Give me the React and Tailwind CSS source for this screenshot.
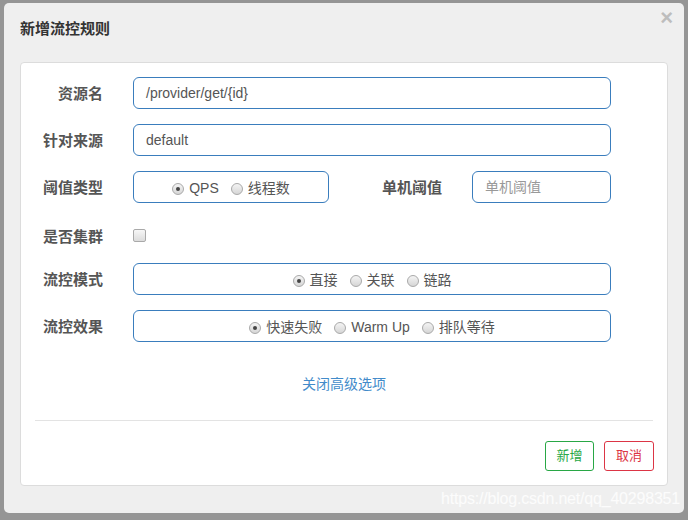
import React from 'react'

const font = { fontFamily: '"Liberation Sans", "Noto Sans CJK SC", sans-serif' }

const Radio = ({ checked }) => (
  <span className="relative inline-block w-[12px] h-[12px] rounded-full border border-[#a9a9a9] bg-gradient-to-b from-[#f4f4f4] to-[#d6d6d6] align-middle">
    {checked && <span className="absolute left-[3px] top-[3px] w-[4px] h-[4px] rounded-full bg-[#444]"></span>}
  </span>
)

const RadioGroup = ({ items, className }) => (
  <div className={`h-[32px] rounded-[6px] border border-[#3a7dbd] flex items-center justify-center gap-[12px] pt-[3px] text-[14px] text-[#555] ${className || ''}`}>
    {items.map((it, i) => (
      <label key={it} className="flex items-center gap-[5px]">
        <Radio checked={i === 0} />
        <span>{it}</span>
      </label>
    ))}
  </div>
)

const Label = ({ children }) => (
  <div className="w-[82px] pt-[3px] text-right text-[15px] font-bold text-[#555] shrink-0">{children}</div>
)

const TextInput = ({ value, placeholder, className }) => (
  <div className={`h-[32px] rounded-[6px] border border-[#3a7dbd] flex items-center px-[12px] text-[14px] ${value ? 'text-[#555]' : 'text-[#999]'} ${className || ''}`}>
    {value || placeholder}
  </div>
)

export default function App() {
  return (
    <div className="w-[688px] h-[520px] bg-[#959595] pt-[3px] px-[4px] overflow-hidden" style={font}>
      <div className="relative h-[510px] bg-[#efefef] rounded-[5px] px-[16px]">
        <div className="h-[59px] flex items-center pb-[6px]">
          <h4 className="text-[15px] font-bold text-[#333]">新增流控规则</h4>
        </div>
        <span className="absolute right-[11px] top-[4px] text-[22px] font-bold text-[#bdbdbd] leading-none">×</span>

        <div className="h-[424px] bg-white border border-[#dcdcdc] rounded-[4px] pt-[14px]">
          <div className="flex flex-col gap-[15px]">
            <div className="flex items-center">
              <Label>资源名</Label>
              <TextInput value="/provider/get/{id}" className="ml-[30px] w-[478px]" />
            </div>
            <div className="flex items-center">
              <Label>针对来源</Label>
              <TextInput value="default" className="ml-[30px] w-[478px]" />
            </div>
            <div className="flex items-center">
              <Label>阈值类型</Label>
              <RadioGroup items={['QPS', '线程数']} className="ml-[30px] w-[196px]" />
              <div className="w-[113px] pt-[3px] text-right text-[15px] font-bold text-[#555]">单机阈值</div>
              <TextInput placeholder="单机阈值" className="ml-[30px] w-[139px]" />
            </div>
            <div className="flex items-center h-[30px] pt-[5px]">
              <Label>是否集群</Label>
              <span className="ml-[30px] w-[13px] h-[13px] rounded-[2px] border border-[#a9a9a9] bg-gradient-to-b from-[#f7f7f7] to-[#dcdcdc]"></span>
            </div>
            <div className="flex items-center">
              <Label>流控模式</Label>
              <RadioGroup items={['直接', '关联', '链路']} className="ml-[30px] w-[478px]" />
            </div>
            <div className="flex items-center">
              <Label>流控效果</Label>
              <RadioGroup items={['快速失败', 'Warm Up', '排队等待']} className="ml-[30px] w-[478px]" />
            </div>
          </div>

          <div className="mt-[32px] text-center text-[14px] text-[#428bca]">关闭高级选项</div>

          <div className="mx-[14px] mt-[25px] border-t border-[#e3e3e3]"></div>

          <div className="flex justify-end gap-[10px] pr-[13px] mt-[20px]">
            <button className="w-[49px] h-[30px] rounded-[3px] border border-[#28a745] text-[13px] text-[#28a745]">新增</button>
            <button className="w-[50px] h-[30px] rounded-[3px] border border-[#dc3545] text-[13px] text-[#dc3545]">取消</button>
          </div>
        </div>

        <div className="absolute right-[4px] bottom-[2px] text-[16px] text-white/80 tracking-[-0.2px]">https://blog.csdn.net/qq_40298351</div>
      </div>
    </div>
  )
}
